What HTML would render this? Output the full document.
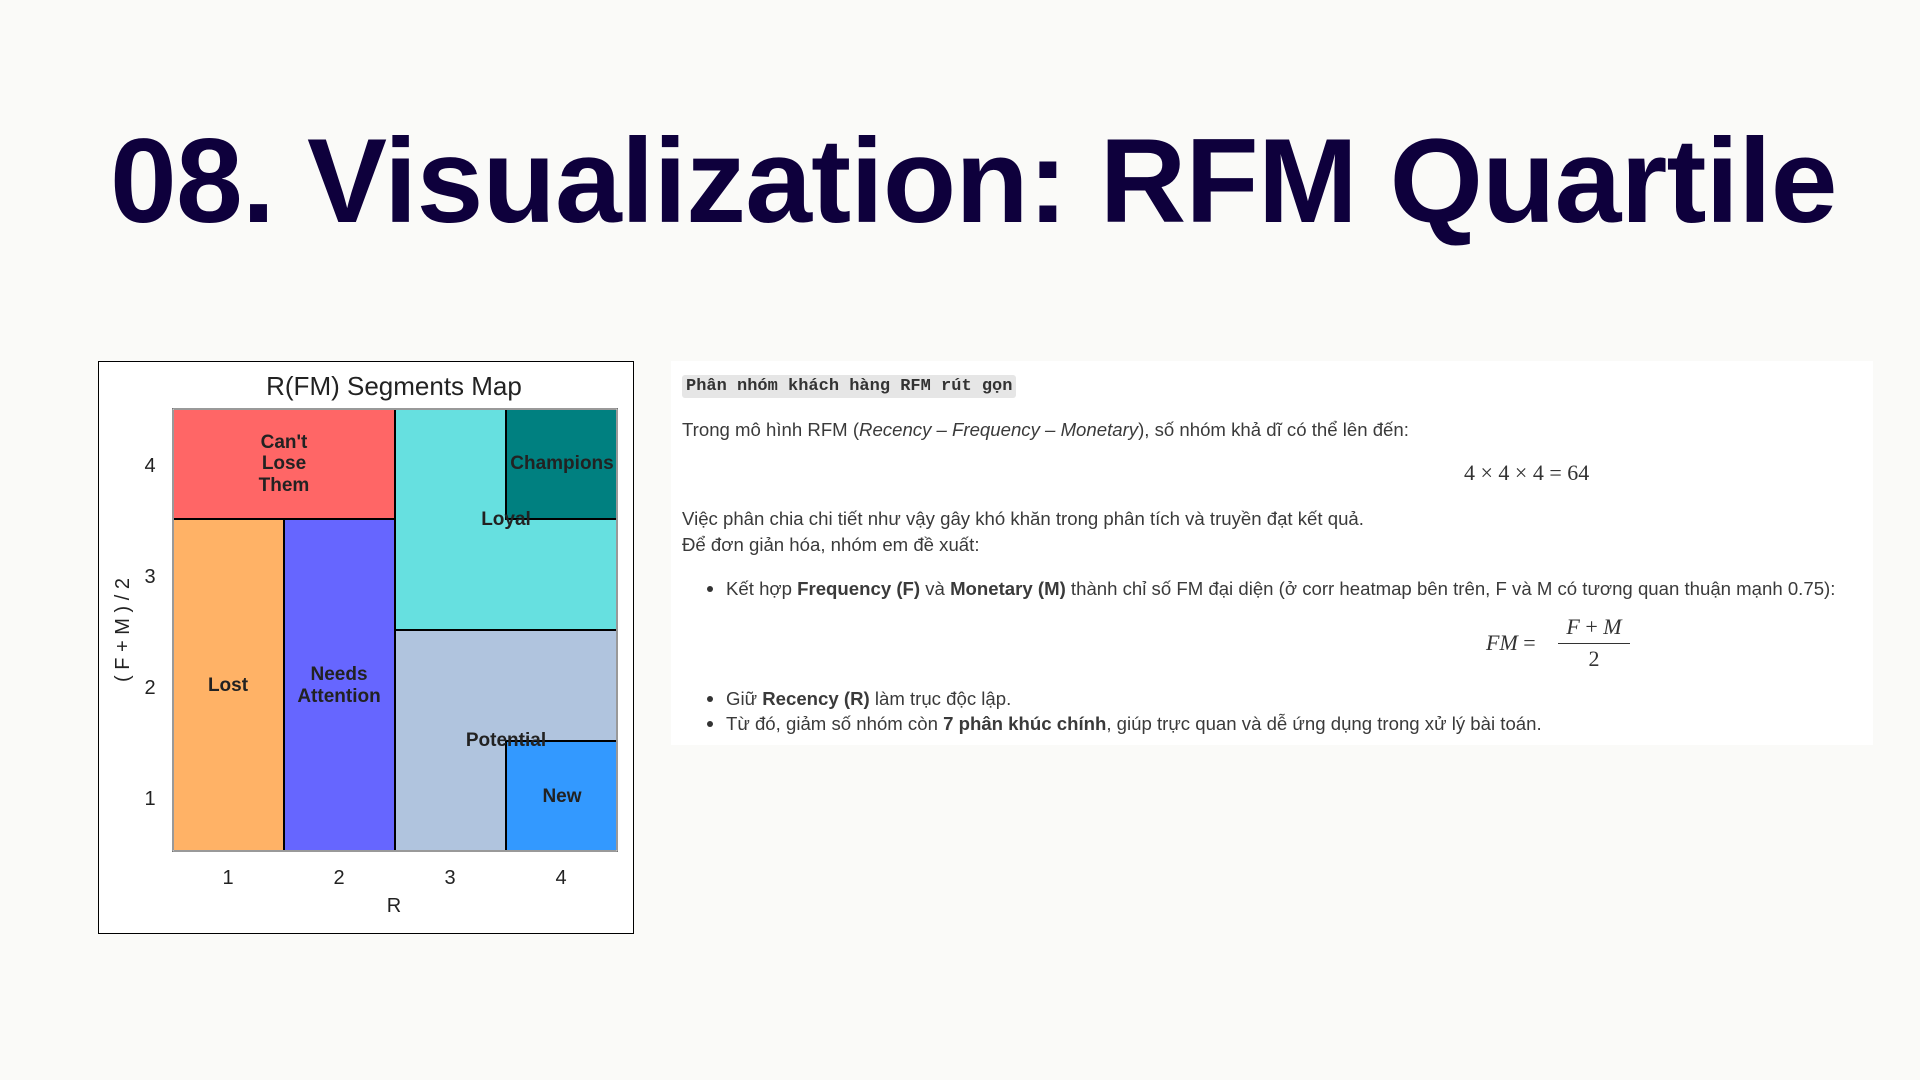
<!DOCTYPE html>
<html><head><meta charset="utf-8">
<style>
*{margin:0;padding:0;box-sizing:border-box}
body{width:1920px;height:1080px;background:#fafaf8;position:relative;overflow:hidden;font-family:"Liberation Sans",sans-serif}
.title{position:absolute;left:110px;top:106px;font-size:120px;font-weight:bold;color:#0e003c;letter-spacing:-0.8px;white-space:nowrap;line-height:150px}
.chart{position:absolute;left:98px;top:361px;width:536px;height:573px;background:#fff;border:1px solid #000}
.abs{position:absolute}
.panel{position:absolute;left:671px;top:361px;width:1202px;height:384px;background:#fff}
.txt{position:absolute;font-size:18.6px;color:#3a3a3a;white-space:nowrap}
.chip{position:absolute;left:682px;top:375px;height:23px;padding:0 4px;background:#e6e6e6;border-radius:3px;font-family:"Liberation Mono",monospace;font-weight:bold;font-size:17px;line-height:23px;color:#333}
.math{position:absolute;font-family:"Liberation Serif",serif;font-size:22px;color:#333;white-space:nowrap}
.dot{position:absolute;width:6px;height:6px;border-radius:50%;background:#333}
</style></head><body>
<div class="title">08. Visualization: RFM Quartile</div>

<div class="chart"></div>
<svg class="abs" style="left:0;top:0" width="1920" height="1080" font-family="Liberation Sans, sans-serif">
  <text x="394" y="395" font-size="26" text-anchor="middle" fill="#222">R(FM) Segments Map</text>
  <g stroke="#000" stroke-width="2">
    <rect x="173" y="409" width="222" height="110" fill="#ff6666"/>
    <rect x="173" y="519" width="111" height="332" fill="#ffb266"/>
    <rect x="284" y="519" width="111" height="332" fill="#6666ff"/>
    <rect x="395" y="409" width="222" height="221" fill="#66e0e0"/>
    <rect x="506" y="409" width="111" height="110" fill="#008080"/>
    <rect x="395" y="630" width="222" height="221" fill="#b0c4de"/>
    <rect x="506" y="741" width="111" height="110" fill="#3399ff"/>
  </g>
  <rect x="173" y="409" width="444" height="442" fill="none" stroke="#ccc" stroke-width="1.5"/>
  <g font-size="19" font-weight="bold" fill="#222" text-anchor="middle">
    <text x="284" y="448">Can't</text><text x="284" y="469">Lose</text><text x="284" y="491">Them</text>
    <text x="228" y="691">Lost</text>
    <text x="339" y="680">Needs</text><text x="339" y="702">Attention</text>
    <text x="562" y="469">Champions</text>
    <text x="506" y="525">Loyal</text>
    <text x="506" y="746">Potential</text>
    <text x="562" y="802">New</text>
  </g>
  <g font-size="20" fill="#222" text-anchor="middle">
    <text x="150" y="472">4</text><text x="150" y="583">3</text><text x="150" y="694">2</text><text x="150" y="805">1</text>
    <text x="228" y="884">1</text><text x="339" y="884">2</text><text x="450" y="884">3</text><text x="561" y="884">4</text>
    <text x="394" y="912">R</text>
    <text transform="translate(129,630) rotate(-90)">( F + M ) / 2</text>
  </g>
</svg>

<div class="panel"></div>
<div class="chip">Phân nhóm khách hàng RFM rút gọn</div>
<div class="txt" style="left:682px;top:419px">Trong mô hình RFM (<i>Recency – Frequency – Monetary</i>), số nhóm khả dĩ có thể lên đến:</div>
<div class="math" style="left:1464px;top:460px">4 × 4 × 4 = 64</div>
<div class="txt" style="left:682px;top:508px">Việc phân chia chi tiết như vậy gây khó khăn trong phân tích và truyền đạt kết quả.</div>
<div class="txt" style="left:682px;top:534px">Để đơn giản hóa, nhóm em đề xuất:</div>
<div class="dot" style="left:707px;top:586px"></div>
<div class="txt" style="left:726px;top:578px">Kết hợp <b>Frequency (F)</b> và <b>Monetary (M)</b> thành chỉ số FM đại diện (ở corr heatmap bên trên, F và M có tương quan thuận mạnh 0.75):</div>
<div class="math" style="left:1486px;top:630px"><i>FM</i> =</div>
<div class="math" style="left:1558px;top:614px;width:72px;text-align:center"><i>F</i> + <i>M</i></div>
<div class="abs" style="left:1558px;top:643px;width:72px;height:1px;background:#333"></div>
<div class="math" style="left:1558px;top:646px;width:72px;text-align:center">2</div>
<div class="dot" style="left:707px;top:696px"></div>
<div class="txt" style="left:726px;top:688px">Giữ <b>Recency (R)</b> làm trục độc lập.</div>
<div class="dot" style="left:707px;top:721px"></div>
<div class="txt" style="left:726px;top:713px">Từ đó, giảm số nhóm còn <b>7 phân khúc chính</b>, giúp trực quan và dễ ứng dụng trong xử lý bài toán.</div>
</body></html>
